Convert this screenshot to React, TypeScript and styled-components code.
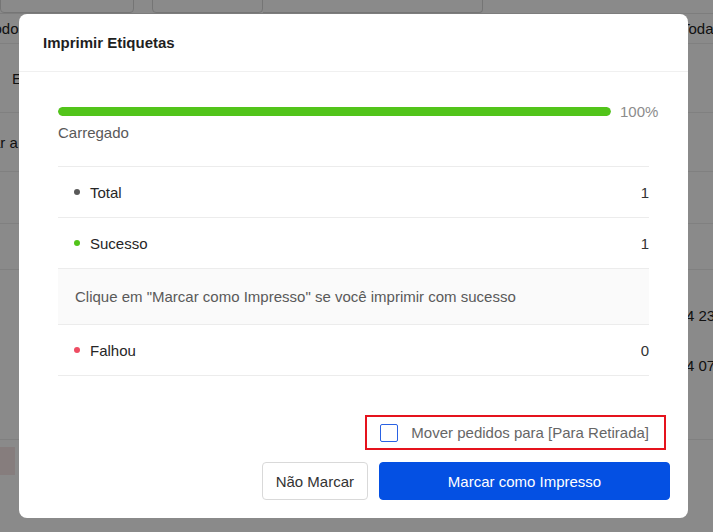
import styled, { createGlobalStyle } from "styled-components";

const GlobalStyle = createGlobalStyle`
  html, body {
    margin: 0;
    padding: 0;
    background: #ffffff;
    font-family: "Liberation Sans", Arial, sans-serif;
  }
  * { box-sizing: border-box; }
`;

// ---------- background page (dimmed behind the modal) ----------

const Page = styled.div`
  position: relative;
  width: 713px;
  height: 532px;
  overflow: hidden;
  background: #ffffff;
  color: #222;
  font-size: 15px;
`;

const Toolbar = styled.div`
  height: 14px;
  display: flex;
  align-items: flex-end;
  border-bottom: 1px solid #e8e8e8;
`;

const FieldBox = styled.div<{ $w: number; $gap?: number; $joined?: boolean }>`
  width: ${(p) => p.$w}px;
  height: 18px;
  margin-top: -14px;
  margin-left: ${(p) => p.$gap ?? 0}px;
  border: 1px solid #d9d9d9;
  border-left-width: ${(p) => (p.$joined ? 0 : 1)}px;
  border-radius: ${(p) => (p.$joined ? "0 4px 4px 0" : "4px")};
`;

const PageRow = styled.div<{ $h: number }>`
  height: ${(p) => p.$h}px;
  display: flex;
  justify-content: space-between;
  align-items: center;
  border-bottom: 1px solid #ececec;
  white-space: nowrap;
`;

const EdgeText = styled.span<{ $shift?: number }>`
  margin-left: ${(p) => p.$shift ?? 0}px;
  margin-right: ${(p) => p.$shift ?? 0}px;
`;

const OrderBlock = styled.div`
  height: 170px;
  display: flex;
  flex-direction: column;
  align-items: flex-end;
  padding-top: 38px;
  gap: 34px;
  border-bottom: 1px solid #ececec;
  white-space: nowrap;
`;

const DateText = styled.span`
  margin-right: -4px;
  width: 31px;
  overflow: hidden;
  line-height: 16px;
`;

const TagMark = styled.div`
  width: 2px;
  height: 10px;
  background: #1f5fe0;
  margin-top: -24px;
  margin-right: 25px;
`;

const PinkCell = styled.div`
  width: 15px;
  height: 28px;
  margin-top: 7px;
  background: #f7e8e8;
`;

const Mask = styled.div`
  position: absolute;
  inset: 0;
  background: rgba(0, 0, 0, 0.46);
`;

// ---------- modal ----------

const Modal = styled.div`
  position: absolute;
  top: 14px;
  left: 19px;
  width: 669px;
  height: 504px;
  background: #ffffff;
  border-radius: 8px;
  display: flex;
  flex-direction: column;
  color: #262626;
`;

const Header = styled.div`
  height: 58px;
  padding: 0 24px;
  display: flex;
  align-items: center;
  border-bottom: 1px solid #f0f0f0;
`;

const Title = styled.div`
  font-size: 15px;
  font-weight: 700;
  color: #1f1f1f;
`;

const Body = styled.div`
  padding: 28px 39px 0;
`;

const ProgressRow = styled.div`
  display: flex;
  align-items: center;
  height: 22px;
  margin-right: -8px;
`;

const Track = styled.div`
  flex: 1;
  height: 9px;
  border-radius: 5px;
  background: #f0f0f0;
  overflow: hidden;
`;

const Fill = styled.div`
  height: 100%;
  border-radius: 5px;
  background: #52c41a;
`;

const Percent = styled.span`
  width: 37px;
  margin-left: 9px;
  font-size: 15px;
  color: #8c8c8c;
  white-space: nowrap;
`;

const Caption = styled.div`
  line-height: 22px;
  font-size: 15px;
  color: #595959;
  margin-bottom: 22px;
`;

const List = styled.div`
  border-top: 1px solid #ececec;
`;

const Row = styled.div`
  height: 51px;
  display: flex;
  align-items: center;
  justify-content: space-between;
  padding-left: 16px;
  border-bottom: 1px solid #ececec;
  font-size: 15px;
`;

const Label = styled.span`
  display: flex;
  align-items: center;
  color: #262626;
`;

const Dot = styled.i<{ $color: string }>`
  width: 6px;
  height: 6px;
  border-radius: 50%;
  background: ${(p) => p.$color};
  margin-right: 10px;
`;

const Count = styled.span`
  color: #333;
`;

const Notice = styled.div`
  height: 56px;
  display: flex;
  align-items: center;
  padding-left: 17px;
  background: #fafafa;
  border-bottom: 1px solid #ececec;
  font-size: 15px;
  color: #595959;
`;

const Footer = styled.div`
  margin-top: auto;
  padding: 0 18px 18px;
  display: flex;
  flex-direction: column;
  align-items: flex-end;
  gap: 12px;
`;

const Highlight = styled.label`
  height: 35px;
  display: flex;
  align-items: center;
  gap: 13px;
  padding: 0 15px 0 13px;
  margin-right: 4px;
  border: 2px solid #e5131d;
  font-size: 15px;
  color: #666;
  cursor: pointer;
`;

const Box = styled.span`
  width: 18px;
  height: 18px;
  margin-top: 1px;
  border: 1.5px solid #2a62e3;
  border-radius: 2px;
  background: #fff;
`;

const Actions = styled.div`
  display: flex;
  gap: 11px;
`;

const Button = styled.button<{ $primary?: boolean }>`
  height: 38px;
  padding: 0 13px;
  border-radius: 4px;
  font-family: inherit;
  font-size: 15px;
  cursor: pointer;
  border: 1px solid ${(p) => (p.$primary ? "#0450e3" : "#d9d9d9")};
  background: ${(p) => (p.$primary ? "#0450e3" : "#ffffff")};
  color: ${(p) => (p.$primary ? "#ffffff" : "#333")};
  width: ${(p) => (p.$primary ? "291px" : "auto")};
`;

const rows = [
  { label: "Total", color: "#595959", value: 1 },
  { label: "Sucesso", color: "#52c41a", value: 1 },
];

export default function App() {
  return (
    <Page>
      <GlobalStyle />
      <Toolbar>
        <FieldBox $w={134} />
        <FieldBox $w={111} $gap={18} />
        <FieldBox $w={220} $joined />
      </Toolbar>
      <PageRow $h={30}>
        <EdgeText $shift={-14}>Todos</EdgeText>
        <EdgeText $shift={-8}>Todas</EdgeText>
      </PageRow>
      <PageRow $h={69}>
        <EdgeText $shift={12}>E</EdgeText>
      </PageRow>
      <PageRow $h={59}>
        <EdgeText $shift={-8}>ar a</EdgeText>
      </PageRow>
      <PageRow $h={52} />
      <PageRow $h={46} />
      <OrderBlock>
        <DateText>4 23</DateText>
        <DateText>4 07</DateText>
        <TagMark />
      </OrderBlock>
      <PinkCell />
      <Mask />

      <Modal>
        <Header>
          <Title>Imprimir Etiquetas</Title>
        </Header>
        <Body>
          <ProgressRow>
            <Track>
              <Fill style={{ width: "100%" }} />
            </Track>
            <Percent>100%</Percent>
          </ProgressRow>
          <Caption>Carregado</Caption>
          <List>
            {rows.map((r) => (
              <Row key={r.label}>
                <Label>
                  <Dot $color={r.color} />
                  {r.label}
                </Label>
                <Count>{r.value}</Count>
              </Row>
            ))}
            <Notice>Clique em "Marcar como Impresso" se você imprimir com sucesso</Notice>
            <Row>
              <Label>
                <Dot $color="#ee4d63" />
                Falhou
              </Label>
              <Count>0</Count>
            </Row>
          </List>
        </Body>
        <Footer>
          <Highlight>
            <Box />
            Mover pedidos para [Para Retirada]
          </Highlight>
          <Actions>
            <Button>Não Marcar</Button>
            <Button $primary>Marcar como Impresso</Button>
          </Actions>
        </Footer>
      </Modal>
    </Page>
  );
}
